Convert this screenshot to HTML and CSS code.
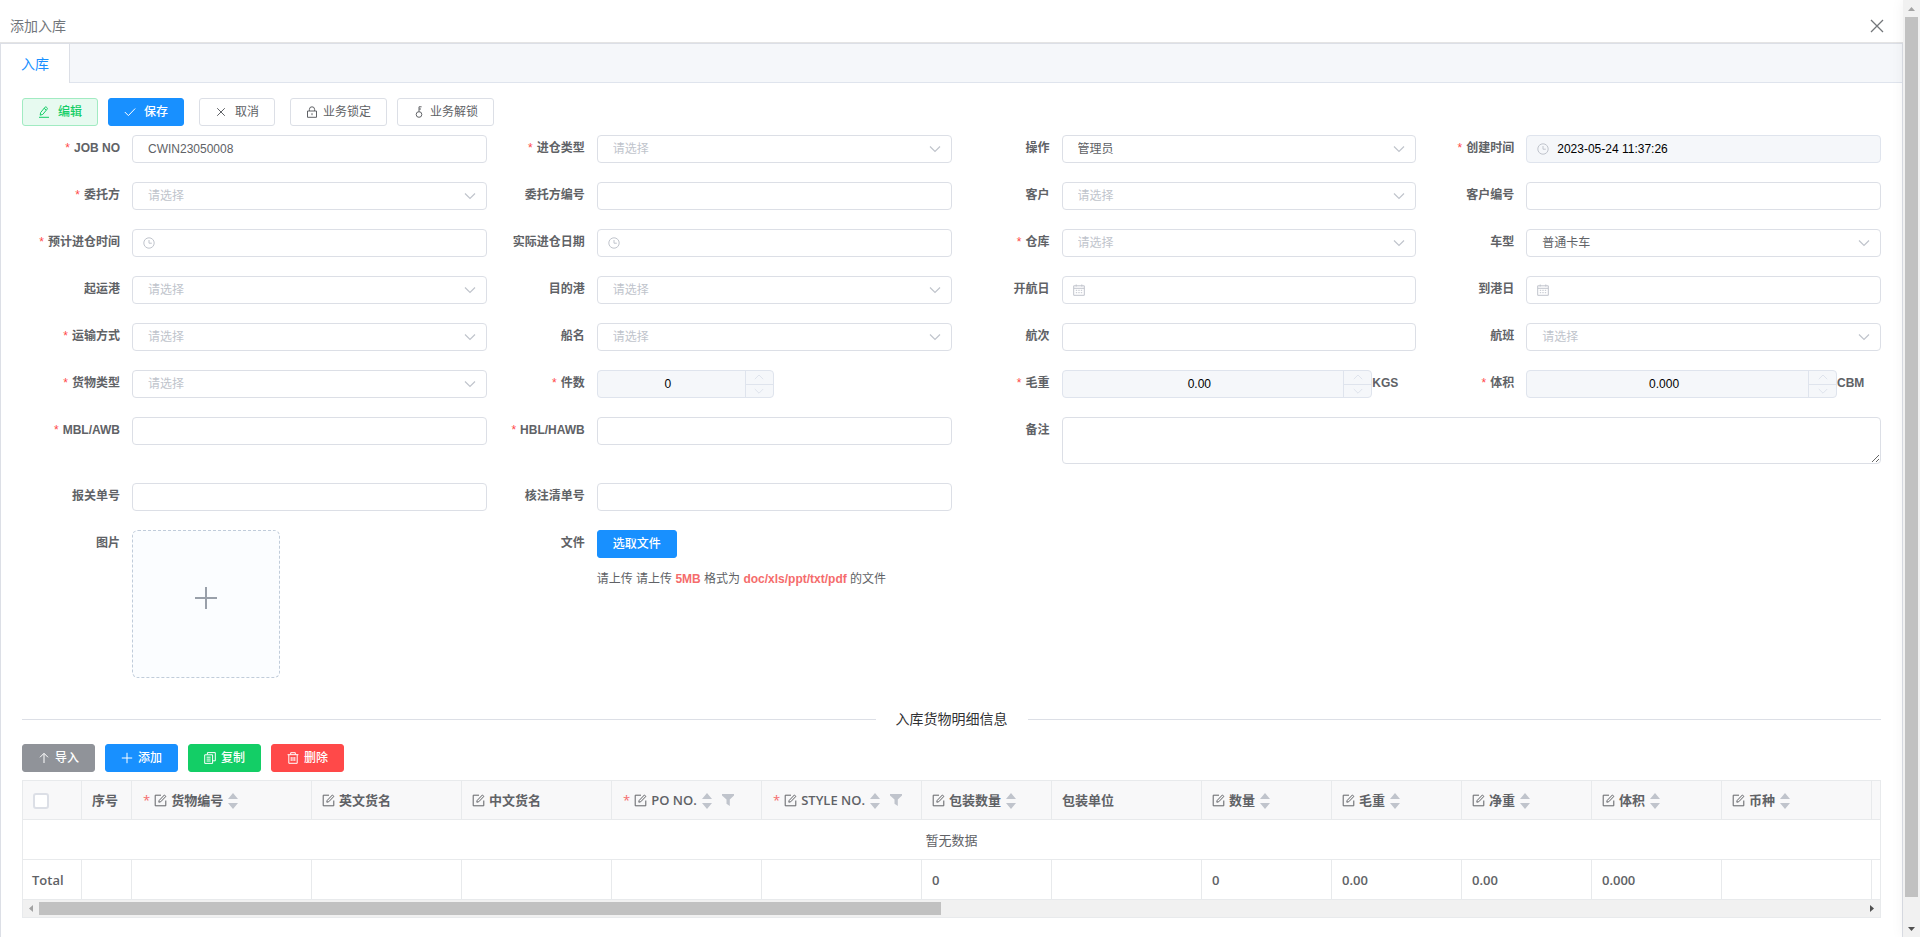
FILE: index.html
```html
<!DOCTYPE html>
<html lang="zh-CN">
<head>
<meta charset="utf-8">
<title>添加入库</title>
<link rel="stylesheet" href="styles.css">
</head>
<body>
<svg class="sprite" aria-hidden="true">
  <symbol id="chevron" viewBox="0 0 12 12"><path d="M1 3.5 6 8.5 11 3.5"/></symbol>
  <symbol id="chevron-up" viewBox="0 0 12 12"><path d="M1.8 8.2 6 4 10.2 8.2"/></symbol>
  <symbol id="chevron-down" viewBox="0 0 12 12"><path d="M1.8 4 6 8.2 10.2 4"/></symbol>
  <symbol id="clock" viewBox="0 0 12 12"><circle cx="6" cy="6" r="5.2"/><path d="M6 3v3.2h2.8"/></symbol>
  <symbol id="calendar" viewBox="0 0 12 12"><path d="M.7 1.8h10.6v9.5H.7zM.7 4.3h10.6M3.2.5v2M8.8.5v2M2.8 6.3h1.4M5.3 6.3h1.4M7.8 6.3h1.4M2.8 8.7h1.4M5.3 8.7h1.4M7.8 8.7h1.4"/></symbol>
  <symbol id="pen" viewBox="0 0 12 12"><path d="M2.2 9.2 2.6 6.6 6.9 1.3 Q7.6.6 8.4 1.2L9 1.7Q9.7 2.4 9.1 3.2L4.8 8.4ZM6.1 2.3 8.2 4M1 11.3h10"/></symbol>
  <symbol id="check" viewBox="0 0 12 12"><path d="M.8 6 4.4 9.6 11.2 2.5"/></symbol>
  <symbol id="cross" viewBox="0 0 12 12"><path d="M2.2 2.2 9.8 9.8M9.8 2.2 2.2 9.8"/></symbol>
  <symbol id="close" viewBox="0 0 14 14"><path d="M1 1 13 13M13 1 1 13"/></symbol>
  <symbol id="lock" viewBox="0 0 12 12"><path d="M1.5 5h9v6.3h-9zM3.4 5V3.4a2.6 2.6 0 0 1 5.2 0V5M6 7.2v2"/></symbol>
  <symbol id="key" viewBox="0 0 12 12"><circle cx="6" cy="8.5" r="2.8"/><path d="M6 5.7V.8h2.6M6 3h2"/></symbol>
  <symbol id="up" viewBox="0 0 12 12"><path d="M6 11V1.5M2 5.3 6 1.3l4 4"/></symbol>
  <symbol id="plus" viewBox="0 0 12 12"><path d="M6 .8v10.4M.8 6h10.4"/></symbol>
  <symbol id="plus-big" viewBox="0 0 24 24"><path d="M12 1v22M1 12h22"/></symbol>
  <symbol id="copy" viewBox="0 0 12 12"><path d="M3.4 2.6V.6h7.9v8.2H9M.7 2.8h7.9v8.6H.7zM2.6 5.2h4M2.6 7.1h4M2.6 9h4"/></symbol>
  <symbol id="trash" viewBox="0 0 12 12"><path d="M.6 2.7h10.8M3.7 2.5V.7h4.6v1.8M1.8 2.7v8.6h8.4V2.7M4.2 5v4M6 5v4M7.8 5v4"/></symbol>
  <symbol id="edit" viewBox="0 0 13 13"><path d="M7 1.2H1.2v10.6h10.6V6.5M4.8 8.2 5.2 6.4 10.4 1 11.9 2.4 6.7 7.8Z"/></symbol>
  <symbol id="sort" viewBox="0 0 10 16"><path d="M5 0 10 6H0zM5 16 0 10h10z"/></symbol>
  <symbol id="filter" viewBox="0 0 12 12"><path d="M0 0h12v1.5L7.8 5.5V12L4.5 9.8V5.5L0 1.5z"/></symbol>
  <symbol id="tri-up" viewBox="0 0 7 4"><path d="M3.5 0 7 4H0z"/></symbol>
  <symbol id="tri-down" viewBox="0 0 7 4"><path d="M0 0h7L3.5 4z"/></symbol>
  <symbol id="tri-left" viewBox="0 0 4 7"><path d="M4 0v7L0 3.5z"/></symbol>
  <symbol id="tri-right" viewBox="0 0 4 7"><path d="M0 0 4 3.5 0 7z"/></symbol>
</svg>

<div class="app">
  <main class="dialog">
    <header class="dialog-header">
      <h1 class="dialog-title">添加入库</h1>
      <button class="close-btn" type="button" aria-label="关闭"><svg><use href="#close"/></svg></button>
    </header>

    <section class="tabs">
      <nav class="tab-bar"><button class="tab" type="button">入库</button></nav>

      <div class="panel">
        <div class="toolbar">
          <div class="btn-group">
            <button class="btn btn-edit btn-spaced" type="button"><svg class="icon"><use href="#pen"/></svg>编辑</button>
            <button class="btn btn-primary btn-spaced" type="button"><svg class="icon"><use href="#check"/></svg>保存</button>
          </div>
          <button class="btn btn-spaced" type="button"><svg class="icon"><use href="#cross"/></svg>取消</button>
          <div class="btn-group">
            <button class="btn" type="button"><svg class="icon"><use href="#lock"/></svg>业务锁定</button>
            <button class="btn" type="button"><svg class="icon"><use href="#key"/></svg>业务解锁</button>
          </div>
        </div>

        <form class="form">
          <div class="field"><label class="label required" for="job">JOB NO</label><div class="control"><input class="input" id="job" type="text" value="CWIN23050008"></div></div>
          <div class="field"><label class="label required" for="in-type">进仓类型</label><div class="control"><select class="input empty" id="in-type"><option>请选择</option></select><svg class="icon arrow"><use href="#chevron"/></svg></div></div>
          <div class="field"><label class="label" for="operator">操作</label><div class="control"><select class="input" id="operator"><option>管理员</option></select><svg class="icon arrow"><use href="#chevron"/></svg></div></div>
          <div class="field"><label class="label required" for="created">创建时间</label><div class="control"><input class="input with-prefix" id="created" type="text" value="2023-05-24 11:37:26" disabled><svg class="icon prefix"><use href="#clock"/></svg></div></div>

          <div class="field"><label class="label required" for="client">委托方</label><div class="control"><select class="input empty" id="client"><option>请选择</option></select><svg class="icon arrow"><use href="#chevron"/></svg></div></div>
          <div class="field"><label class="label" for="client-no">委托方编号</label><div class="control"><input class="input" id="client-no" type="text"></div></div>
          <div class="field"><label class="label" for="customer">客户</label><div class="control"><select class="input empty" id="customer"><option>请选择</option></select><svg class="icon arrow"><use href="#chevron"/></svg></div></div>
          <div class="field"><label class="label" for="customer-no">客户编号</label><div class="control"><input class="input" id="customer-no" type="text"></div></div>

          <div class="field"><label class="label required" for="eta">预计进仓时间</label><div class="control"><input class="input with-prefix" id="eta" type="text"><svg class="icon prefix"><use href="#clock"/></svg></div></div>
          <div class="field"><label class="label" for="ata">实际进仓日期</label><div class="control"><input class="input with-prefix" id="ata" type="text"><svg class="icon prefix"><use href="#clock"/></svg></div></div>
          <div class="field"><label class="label required" for="warehouse">仓库</label><div class="control"><select class="input empty" id="warehouse"><option>请选择</option></select><svg class="icon arrow"><use href="#chevron"/></svg></div></div>
          <div class="field"><label class="label" for="truck">车型</label><div class="control"><select class="input" id="truck"><option>普通卡车</option></select><svg class="icon arrow"><use href="#chevron"/></svg></div></div>

          <div class="field"><label class="label" for="pol">起运港</label><div class="control"><select class="input empty" id="pol"><option>请选择</option></select><svg class="icon arrow"><use href="#chevron"/></svg></div></div>
          <div class="field"><label class="label" for="pod">目的港</label><div class="control"><select class="input empty" id="pod"><option>请选择</option></select><svg class="icon arrow"><use href="#chevron"/></svg></div></div>
          <div class="field"><label class="label" for="etd">开航日</label><div class="control"><input class="input with-prefix" id="etd" type="text"><svg class="icon prefix"><use href="#calendar"/></svg></div></div>
          <div class="field"><label class="label" for="arrive">到港日</label><div class="control"><input class="input with-prefix" id="arrive" type="text"><svg class="icon prefix"><use href="#calendar"/></svg></div></div>

          <div class="field"><label class="label required" for="transport">运输方式</label><div class="control"><select class="input empty" id="transport"><option>请选择</option></select><svg class="icon arrow"><use href="#chevron"/></svg></div></div>
          <div class="field"><label class="label" for="vessel">船名</label><div class="control"><select class="input empty" id="vessel"><option>请选择</option></select><svg class="icon arrow"><use href="#chevron"/></svg></div></div>
          <div class="field"><label class="label" for="voyage">航次</label><div class="control"><input class="input" id="voyage" type="text"></div></div>
          <div class="field"><label class="label" for="flight">航班</label><div class="control"><select class="input empty" id="flight"><option>请选择</option></select><svg class="icon arrow"><use href="#chevron"/></svg></div></div>

          <div class="field"><label class="label required" for="cargo">货物类型</label><div class="control"><select class="input empty" id="cargo"><option>请选择</option></select><svg class="icon arrow"><use href="#chevron"/></svg></div></div>
          <div class="field"><label class="label required" for="pieces">件数</label><div class="control control-half"><input class="input number" id="pieces" type="text" value="0" disabled><div class="stepper"><button type="button" disabled aria-label="增加"><svg class="icon"><use href="#chevron-up"/></svg></button><button type="button" disabled aria-label="减少"><svg class="icon"><use href="#chevron-down"/></svg></button></div></div></div>
          <div class="field"><label class="label required" for="gross">毛重</label><div class="control"><input class="input number" id="gross" type="text" value="0.00" disabled><div class="stepper"><button type="button" disabled aria-label="增加"><svg class="icon"><use href="#chevron-up"/></svg></button><button type="button" disabled aria-label="减少"><svg class="icon"><use href="#chevron-down"/></svg></button></div></div><span class="unit">KGS</span></div>
          <div class="field"><label class="label required" for="volume">体积</label><div class="control"><input class="input number" id="volume" type="text" value="0.000" disabled><div class="stepper"><button type="button" disabled aria-label="增加"><svg class="icon"><use href="#chevron-up"/></svg></button><button type="button" disabled aria-label="减少"><svg class="icon"><use href="#chevron-down"/></svg></button></div></div><span class="unit">CBM</span></div>

          <div class="field"><label class="label required" for="mbl">MBL/AWB</label><div class="control"><input class="input" id="mbl" type="text"></div></div>
          <div class="field"><label class="label required" for="hbl">HBL/HAWB</label><div class="control"><input class="input" id="hbl" type="text"></div></div>
          <div class="field field-wide"><label class="label" for="remark">备注</label><div class="control"><textarea class="input textarea" id="remark"></textarea></div></div>

          <div class="field"><label class="label" for="declare">报关单号</label><div class="control"><input class="input" id="declare" type="text"></div></div>
          <div class="field field-second"><label class="label" for="checklist">核注清单号</label><div class="control"><input class="input" id="checklist" type="text"></div></div>

          <div class="field"><label class="label" for="picture">图片</label><button class="upload" id="picture" type="button" aria-label="上传图片"><svg><use href="#plus-big"/></svg></button></div>
          <div class="field"><label class="label" for="file">文件</label><div class="file"><button class="btn btn-primary" id="file" type="button">选取文件</button><p class="hint">请上传 请上传 <b>5MB</b> 格式为 <b>doc/xls/ppt/txt/pdf</b> 的文件</p></div></div>
        </form>

        <h2 class="divider">入库货物明细信息</h2>

        <div class="toolbar toolbar-table">
          <button class="btn btn-info" type="button"><svg class="icon"><use href="#up"/></svg>导入</button>
          <button class="btn btn-primary" type="button"><svg class="icon"><use href="#plus"/></svg>添加</button>
          <button class="btn btn-success" type="button"><svg class="icon"><use href="#copy"/></svg>复制</button>
          <button class="btn btn-danger" type="button"><svg class="icon"><use href="#trash"/></svg>删除</button>
        </div>

        <div class="grid">
          <table class="table">
            <colgroup>
              <col class="c-check"><col class="c-index"><col class="c-code"><col class="c-150"><col class="c-150"><col class="c-150"><col class="c-160"><col class="c-130"><col class="c-150"><col class="c-130"><col class="c-130"><col class="c-130"><col class="c-130"><col class="c-150"><col>
            </colgroup>
            <thead>
              <tr>
                <th><input class="checkbox" type="checkbox" aria-label="全选"></th>
                <th><div class="cell">序号</div></th>
                <th><div class="cell"><span class="star">*</span><svg class="edit"><use href="#edit"/></svg>货物编号<svg class="sort"><use href="#sort"/></svg></div></th>
                <th><div class="cell"><svg class="edit"><use href="#edit"/></svg>英文货名</div></th>
                <th><div class="cell"><svg class="edit"><use href="#edit"/></svg>中文货名</div></th>
                <th><div class="cell"><span class="star">*</span><svg class="edit"><use href="#edit"/></svg>PO NO.<svg class="sort"><use href="#sort"/></svg><svg class="filter"><use href="#filter"/></svg></div></th>
                <th><div class="cell"><span class="star">*</span><svg class="edit"><use href="#edit"/></svg>STYLE NO.<svg class="sort"><use href="#sort"/></svg><svg class="filter"><use href="#filter"/></svg></div></th>
                <th><div class="cell"><svg class="edit"><use href="#edit"/></svg>包装数量<svg class="sort"><use href="#sort"/></svg></div></th>
                <th><div class="cell">包装单位</div></th>
                <th><div class="cell"><svg class="edit"><use href="#edit"/></svg>数量<svg class="sort"><use href="#sort"/></svg></div></th>
                <th><div class="cell"><svg class="edit"><use href="#edit"/></svg>毛重<svg class="sort"><use href="#sort"/></svg></div></th>
                <th><div class="cell"><svg class="edit"><use href="#edit"/></svg>净重<svg class="sort"><use href="#sort"/></svg></div></th>
                <th><div class="cell"><svg class="edit"><use href="#edit"/></svg>体积<svg class="sort"><use href="#sort"/></svg></div></th>
                <th><div class="cell"><svg class="edit"><use href="#edit"/></svg>币种<svg class="sort"><use href="#sort"/></svg></div></th>
                <th></th>
              </tr>
            </thead>
            <tbody>
              <tr><td class="no-data" colspan="15">暂无数据</td></tr>
            </tbody>
            <tfoot>
              <tr><td>Total</td><td></td><td></td><td></td><td></td><td></td><td></td><td>0</td><td></td><td>0</td><td>0.00</td><td>0.00</td><td>0.000</td><td></td><td></td></tr>
            </tfoot>
          </table>
          <div class="hscroll" aria-hidden="true">
            <span class="scroll-end"><svg class="tri-v muted"><use href="#tri-left"/></svg></span>
            <div class="hscroll-track"><div class="hscroll-thumb"></div></div>
            <span class="scroll-end"><svg class="tri-v"><use href="#tri-right"/></svg></span>
          </div>
        </div>
      </div>
    </section>
  </main>

  <div class="vscroll" aria-hidden="true">
    <span class="scroll-end"><svg class="tri-h muted"><use href="#tri-up"/></svg></span>
    <div class="vscroll-track"><div class="vscroll-thumb"></div></div>
    <span class="scroll-end"><svg class="tri-h"><use href="#tri-down"/></svg></span>
  </div>
</div>
</body>
</html>
```

FILE: styles.css
```css
* { box-sizing: border-box; }

body {
  margin: 0;
  background: #fff;
  color: #606266;
  font: 12px/16px "Liberation Sans", Arial, "Noto Sans CJK SC", sans-serif;
}

button, input, select, textarea { font: inherit; color: inherit; }
button { cursor: pointer; }
svg { display: block; flex: none; fill: none; stroke: currentColor; }
.sprite { position: absolute; width: 0; height: 0; }
.icon { width: 12px; height: 12px; }

.app { display: flex; height: 100vh; overflow: hidden; }
.dialog { flex: 1; min-width: 0; display: flex; flex-direction: column; }

.dialog-header {
  display: flex;
  align-items: center;
  justify-content: space-between;
  height: 43px;
  padding: 9px 19px 0 10px;
  border-bottom: 1px solid #e4e4e4;
}
.dialog-title { margin: 0; font-size: 14px; font-weight: 400; color: #72767b; }
.close-btn { padding: 0; border: 0; background: none; color: #73767a; }
.close-btn svg { width: 14px; height: 14px; stroke-width: 1.3; }

.tabs {
  flex: 1;
  display: flex;
  flex-direction: column;
  min-height: 0;
  border: 1px solid #dcdfe6;
  border-bottom: 0;
}
.tab-bar { display: flex; height: 39px; background: #f5f7fa; border-bottom: 1px solid #dfe4ed; }
.tab {
  height: 39px;
  padding: 0 20px;
  border: 0;
  border-right: 1px solid #dcdfe6;
  background: #fff;
  color: #1890ff;
  font-size: 14px;
}

.panel { padding: 15px 21px; }

.toolbar { display: flex; gap: 15px; }
.toolbar-table { gap: 10px; margin-bottom: 8px; }
.btn-group { display: flex; gap: 10px; }
.btn {
  display: inline-flex;
  align-items: center;
  gap: 5px;
  height: 28px;
  padding: 0 15px;
  border: 1px solid #dcdfe6;
  border-radius: 3px;
  background: #fff;
  white-space: nowrap;
}
.btn-spaced { gap: 8px; }
.btn-edit { background: #e7faf0; border-color: #a1ebc2; color: #13ce66; font-weight: 500; }
.btn-primary { background: #1890ff; border-color: #1890ff; color: #fff; font-weight: 500; }
.btn-info { background: #909399; border-color: #909399; color: #fff; font-weight: 500; }
.btn-success { background: #13ce66; border-color: #13ce66; color: #fff; font-weight: 500; }
.btn-danger { background: #ff4949; border-color: #ff4949; color: #fff; font-weight: 500; }

.form {
  display: grid;
  grid-template-columns: repeat(4, minmax(0, 1fr));
  row-gap: 19px;
  margin-top: 9px;
}
.field { display: flex; align-items: flex-start; min-width: 0; }
.field-wide { grid-column: span 2; }
.field-second { grid-column: 2; }
.field-second + .field { grid-column: 1; }
.label {
  flex: none;
  width: 110px;
  padding-right: 12px;
  line-height: 26px;
  text-align: right;
  font-weight: 700;
  white-space: nowrap;
}
.required::before { content: "*"; margin-right: 4px; color: #ff4949; font-weight: 400; }
.unit { width: 44px; line-height: 26px; font-weight: 700; }

.control { position: relative; flex: 1; min-width: 0; }
.control-half { flex: 0 0 177px; }
.input {
  display: block;
  width: 100%;
  height: 28px;
  padding: 0 15px;
  border: 1px solid #dcdfe6;
  border-radius: 4px;
  background: #fff;
  appearance: none;
  outline: 0;
}
.input:disabled { background: #f5f7fa; border-color: #dfe4ed; color: #000; opacity: 1; }
.empty { color: #c0c4cc; }
.with-prefix { padding-left: 30px; }
.number { padding: 0 49px 0 14px; text-align: center; }
.textarea { height: 47px; padding: 5px 15px; resize: vertical; }

.arrow, .prefix { position: absolute; top: 8px; color: #c0c4cc; pointer-events: none; }
.arrow { right: 11px; stroke-width: 1.2; }
.prefix { left: 11px; }

.stepper {
  position: absolute;
  top: 1px;
  right: 1px;
  bottom: 1px;
  display: flex;
  flex-direction: column;
  width: 28px;
  border-left: 1px solid #dfe4ed;
}
.stepper button {
  flex: 1;
  display: flex;
  align-items: center;
  justify-content: center;
  padding: 0;
  border: 0;
  background: none;
  color: #dfe4ed;
}
.stepper button + button { border-top: 1px solid #dfe4ed; }

.upload {
  display: flex;
  align-items: center;
  justify-content: center;
  width: 148px;
  height: 148px;
  padding: 0 0 12px;
  border: 1px dashed #c0ccda;
  border-radius: 6px;
  background: #fbfdff;
  color: #99a0aa;
}
.upload svg { width: 24px; height: 24px; stroke-width: 2; }
.hint { margin: 13px 0 0; white-space: nowrap; }
.hint b { color: #f56c6c; }

.divider {
  display: flex;
  align-items: center;
  gap: 20px;
  margin: 33px 0 17px;
  color: #303133;
  font-size: 14px;
  font-weight: 400;
  line-height: 16px;
}
.divider::before, .divider::after { content: ""; flex: 1; height: 1px; background: #dcdfe6; }

.grid {
  border: 1px solid #e8eaec;
  overflow: hidden;
  font-family: "Open Sans", "Noto Sans CJK SC", sans-serif;
  font-size: 13px;
}
.table { width: 100%; table-layout: fixed; border-collapse: separate; border-spacing: 0; }
.c-check { width: 59px; }
.c-index { width: 50px; }
.c-code { width: 180px; }
.c-130 { width: 130px; }
.c-150 { width: 150px; }
.c-160 { width: 160px; }
.table th, .table td {
  height: 40px;
  padding: 0 9px;
  border-right: 1px solid #e8eaec;
  border-bottom: 1px solid #e8eaec;
  text-align: left;
  font-weight: 600;
  white-space: nowrap;
  overflow: hidden;
}
.table th { height: 39px; background: #f8f8f9; }
.table th:nth-child(n + 2), .table td:nth-child(n + 2) { padding: 0 10px; }
.table tr > :last-child { padding: 0; border-right: 0; }
.table .no-data { text-align: center; font-weight: 400; }
.cell { display: flex; align-items: center; }
.star { padding: 0 4px 0 1px; color: #f56c6c; font-weight: 400; }
.edit { width: 13px; height: 13px; margin-right: 4px; }
.sort { width: 10px; height: 16px; margin: 2px 0 0 5px; fill: #c0c4cc; stroke: none; }
.filter { width: 12px; height: 12px; margin-left: 10px; fill: #c0c4cc; stroke: none; }
.checkbox {
  display: block;
  width: 16px;
  height: 16px;
  margin: 2px 0 0 1px;
  border: 2px solid #dcdfe6;
  border-radius: 3px;
  background: #fff;
  appearance: none;
}

.scroll-end { display: flex; flex: none; align-items: center; justify-content: center; width: 17px; height: 17px; }
.tri-h, .tri-v { fill: #505050; stroke: none; }
.tri-h { width: 7px; height: 4px; }
.tri-v { width: 4px; height: 7px; }
.muted { fill: #a3a3a3; }
.hscroll { display: flex; height: 17px; background: #f1f1f1; }
.hscroll .scroll-end { width: 16px; }
.hscroll-track { flex: 1; padding: 2px 0; }
.hscroll-thumb { width: 49.4%; height: 13px; background: #c1c1c1; }
.vscroll {
  display: flex;
  flex: none;
  flex-direction: column;
  width: 17px;
  background: #f1f1f1;
  box-shadow: 0 0 14px rgba(0, 0, 0, 0.06);
}
.vscroll-track { flex: 1; padding: 0 2px; }
.vscroll-thumb { height: 97.5%; background: #c1c1c1; }
```
